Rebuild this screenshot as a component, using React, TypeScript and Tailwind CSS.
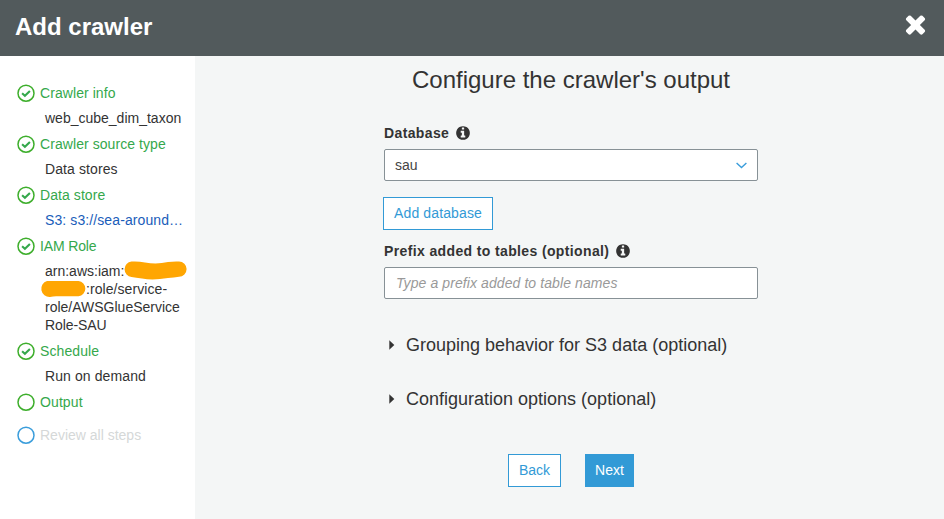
import type { ReactNode } from "react";

type StepState = "done" | "current" | "pending";

function StepIcon({ state }: { state: StepState }) {
  return (
    <svg viewBox="0 0 18 18" className={`size-[18px] shrink-0 ${state === "pending" ? "text-[#3a9ddb]" : "text-[#3dae2b]"}`} fill="none" stroke="currentColor">
      <circle cx="9" cy="9.2" r="8" strokeWidth="1.5" />
      {state === "done" && <path d="M5.100 9.200 L7.900 11.700 L12.900 6.900" stroke="#35a84c" strokeWidth="2.1" />}
    </svg>
  );
}

function Step({ state, title, spacing = "tracking-[0.07px]", className = "", children }: { state: StepState; title: string; spacing?: string; className?: string; children?: ReactNode }) {
  return (
    <li className={className}>
      <div className={`flex h-[18px] items-center gap-[5px] ${state === "pending" ? "text-[#d5d8d8]" : "text-[#35a84c]"}`}>
        <StepIcon state={state} />
        <span className={spacing}>{title}</span>
      </div>
      {children && <div className="mt-[7px] pl-7">{children}</div>}
    </li>
  );
}

function InfoIcon() {
  return (
    <svg viewBox="0 0 1792 1792" className="size-4 shrink-0" fill="currentColor">
      <path d="M1152 1376v-160q0-14-9-23t-23-9h-96v-512q0-14-9-23t-23-9h-320q-14 0-23 9t-9 23v160q0 14 9 23t23 9h96v320h-96q-14 0-23 9t-9 23v160q0 14 9 23t23 9h448q14 0 23-9t9-23zm-128-896v-160q0-14-9-23t-23-9h-192q-14 0-23 9t-9 23v160q0 14 9 23t23 9h192q14 0 23-9t9-23zm640 416q0 209-103 385.5t-279.5 279.5-385.5 103-385.5-103-279.5-279.5-103-385.5 103-385.5 279.5-279.5 385.5-103 385.5 103 279.5 279.5 103 385.5z" />
    </svg>
  );
}

function Label({ text }: { text: string }) {
  return (
    <label className="flex h-[18px] items-center gap-[6px] font-bold tracking-[0.37px]">
      {text}
      <InfoIcon />
    </label>
  );
}

function Disclosure({ text, className }: { text: string; className: string }) {
  return (
    <button className={`flex h-6 items-center gap-[11px] pl-[5px] text-[18px] leading-6 ${className}`}>
      <svg viewBox="0 0 6 10" className="h-[10px] w-[6px]" fill="currentColor">
        <path d="M0.3 0.3 L5.3 5 L0.3 9.7 Z" />
      </svg>
      {text}
    </button>
  );
}

export default function App() {
  return (
    <div className="flex h-[519px] w-[944px] flex-col overflow-hidden bg-[#f4f6f6] font-['Liberation_Sans',Arial,sans-serif] text-[14px] leading-[18px] text-[#333]">
      <header className="flex h-14 shrink-0 items-start justify-between bg-[#525a5c] pl-[15px] pr-[14px] text-white">
        <h1 className="mt-3 text-[24px] font-bold leading-[30px]">Add crawler</h1>
        <button aria-label="Close" className="mt-[9px]">
          <svg viewBox="0 -30 1792 1792" className="size-[29px]" fill="currentColor">
            <path d="M1490 1322q0 40-28 68l-136 136q-28 28-68 28t-68-28l-294-294-294 294q-28 28-68 28t-68-28l-136-136q-28-28-28-68t28-68l294-294-294-294q-28-28-28-68t28-68l136-136q28-28 68-28t68 28l294 294 294-294q28-28 68-28t68 28l136 136q28 28 28 68t-28 68l-294 294 294 294q28 28 28 68z" />
          </svg>
        </button>
      </header>
      <div className="flex grow">
        <aside className="w-[195px] shrink-0 bg-white pl-[17px] pt-7">
          <ol className="flex flex-col gap-2">
            <Step state="done" title="Crawler info">web_cube_dim_taxon</Step>
            <Step state="done" title="Crawler source type">
              <span className="tracking-[0.1px]">Data stores</span>
            </Step>
            <Step state="done" title="Data store">
              <div className="whitespace-nowrap tracking-[0.1px] text-[#1a5dba]">S3: s3://sea-around…</div>
            </Step>
            <Step state="done" title="IAM Role" spacing="tracking-[-0.15px]">
              <div className="relative whitespace-nowrap">
                <div>arn:aws:iam:</div>
                <div className="pl-[41px] tracking-[0.07px]">:role/service-</div>
                <div>role/AWSGlueService</div>
                <div className="tracking-[-0.1px]">Role-SAU</div>
                <svg viewBox="0 0 150 38" className="absolute -left-[7px] -top-[2px] h-[38px] w-[150px]" fill="#ffa602">
                  <path d="M93.500 1.500 Q100 1 107 2.500 Q119 4.500 130 2 Q136 1.200 141 1.500 A7.600 7.600 0 0 1 141 16.700 Q136 17.500 130 18 Q115 20.500 104 18.500 Q98 17.800 93.500 17 A7.800 7.800 0 0 1 93.500 1.500 Z" />
                  <path d="M9 21 H40.500 A7.700 7.700 0 0 1 40.500 36.300 H20 Q16 36 12 37 A8.200 8.200 0 0 1 9 21 Z" />
                </svg>
              </div>
            </Step>
            <Step state="done" title="Schedule" spacing="tracking-[0.1px]">
              <span className="tracking-[0.1px]">Run on demand</span>
            </Step>
            <Step state="current" title="Output" spacing="tracking-[0.1px]" />
            <Step state="pending" title="Review all steps" spacing="tracking-normal" className="mt-[7px]" />
          </ol>
        </aside>
        <main className="grow pl-[189px]">
          <div className="w-[374px]">
            <h2 className="mt-[9px] whitespace-nowrap text-center text-[24px] leading-[30px]">Configure the crawler's output</h2>
            <div className="mt-[29px]"><Label text="Database" /></div>
            <div className="mt-[7px] flex h-8 items-center justify-between rounded-[2px] border border-[#879196] bg-white pl-[10px] pr-[10px] text-[#444]">
              sau
              <svg viewBox="0 0 11 7" className="h-[7px] w-[11px]" fill="none" stroke="#3a9ddb" strokeWidth="1.4">
                <path d="M0.6 1 L5.5 5.600 L10.400 1" />
              </svg>
            </div>
            <button className="-ml-px mt-4 block h-[33px] w-[110px] border border-[#329ad6] bg-white pb-[2px] tracking-[0.12px] text-[#329ad6]">Add database</button>
            <div className="mt-3"><Label text="Prefix added to tables (optional)" /></div>
            <input className="mt-[7px] block h-8 w-full rounded-[2px] border border-[#879196] bg-white px-[11px] italic tracking-[0.09px] placeholder:text-[#999] placeholder:opacity-100" placeholder="Type a prefix added to table names" />
            <Disclosure className="mt-[34px]" text="Grouping behavior for S3 data (optional)" />
            <Disclosure className="mt-[30px]" text="Configuration options (optional)" />
            <div className="mt-[43px] flex justify-center gap-6">
              <button className="h-[33px] w-[53px] border border-[#329ad6] bg-white pb-[2px] text-[#329ad6]">Back</button>
              <button className="h-[33px] w-[49px] bg-[#329ad6] pb-[2px] text-white">Next</button>
            </div>
          </div>
        </main>
      </div>
    </div>
  );
}
